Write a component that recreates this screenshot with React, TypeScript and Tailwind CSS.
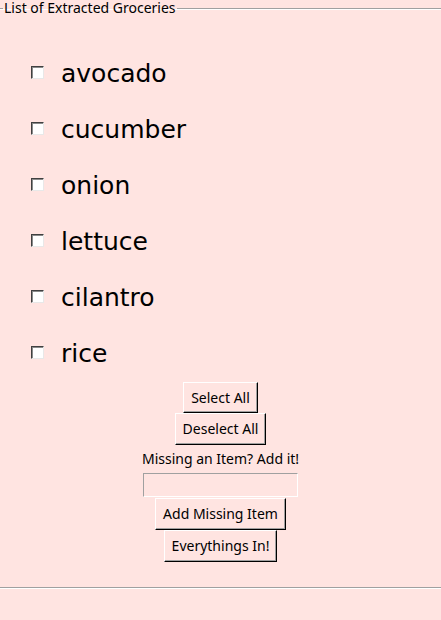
import React from "react";

const items = ["avocado", "cucumber", "onion", "lettuce", "cilantro", "rice"];

function TkButton({ label, h }: { label: string; h: string }) {
  return (
    <button
      className={`${h} flex items-center justify-center px-[7px] bg-[#ffe4e1] border border-t-white border-l-white border-r-black border-b-black shadow-[inset_-1px_-1px_0_#a0a0a0] text-[14px] leading-[18px] text-black font-['Noto_Sans',sans-serif]`}
    >
      {label}
    </button>
  );
}

export default function App() {
  return (
    <div className="w-[441px] min-h-[620px] bg-[#ffe4e1] font-['Noto_Sans',sans-serif] text-black">
      <fieldset className="m-0 p-0 border-x-0 border-t border-b border-[#a0a0a0] shadow-[inset_0_1px_0_#ffffff,0_1px_0_#ffffff]">
        <legend className="ml-[3px] px-[1px] text-[14px] leading-[16px]">
          List of Extracted Groceries
        </legend>
        <div className="mt-[30px] flex flex-col pl-[31px]">
          {items.map((it) => (
            <div key={it} className="h-[56px] flex items-center">
              <div className="w-[13px] h-[13px] mb-[3px] bg-white border border-t-[#404040] border-l-[#404040] border-r-[#e8e8e8] border-b-[#e8e8e8] shadow-[inset_1px_1px_0_#8a8a8a]" />
              <span className="ml-[17px] text-[25px] leading-[56px] font-['DejaVu_Sans',sans-serif]">
                {it}
              </span>
            </div>
          ))}
        </div>
        <div className="flex flex-col items-center pb-[25px]">
          <TkButton label="Select All" h="h-[31px]" />
          <TkButton label="Deselect All" h="h-[32px]" />
          <div className="h-[28px] flex items-center text-[14px] leading-[18px]">
            Missing an Item? Add it!
          </div>
          <input
            type="text"
            className="w-[155px] h-[24px] bg-[#ffe4e1] border border-t-[#a0a0a0] border-l-[#a0a0a0] border-r-white border-b-white outline-none"
          />
          <div className="mt-[1px]" />
          <TkButton label="Add Missing Item" h="h-[32px]" />
          <TkButton label="Everythings In!" h="h-[32px]" />
        </div>
      </fieldset>
    </div>
  );
}
